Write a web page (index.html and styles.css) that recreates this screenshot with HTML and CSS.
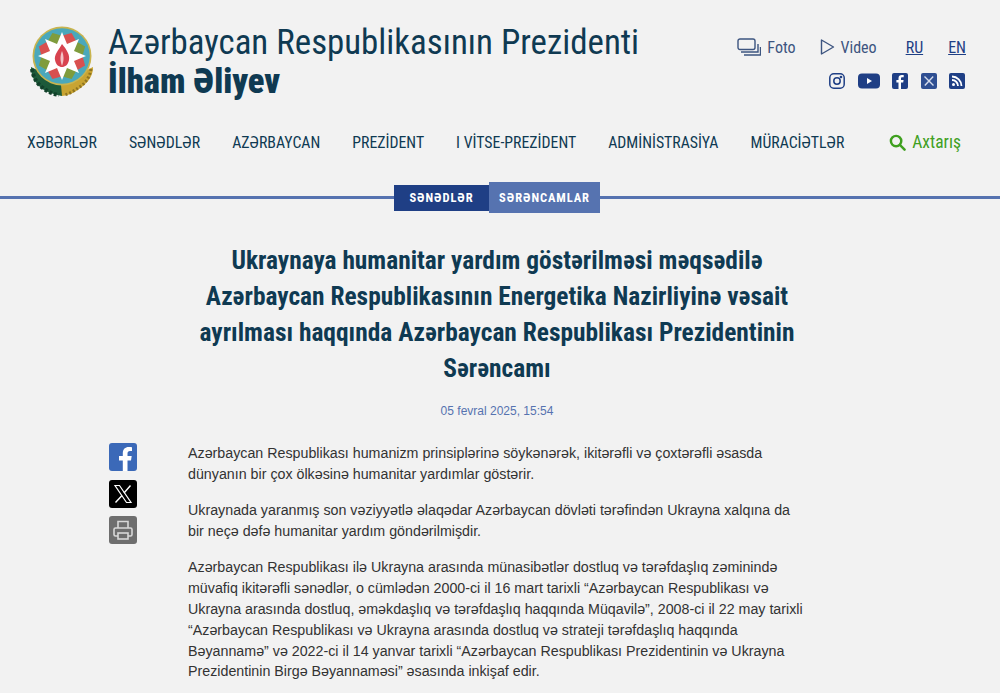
FILE: index.html
```html
<!DOCTYPE html>
<html lang="az">
  <head>
    <meta charset="utf-8">
    <meta name="viewport" content="width=device-width">
    <title>Ukraynaya humanitar yardım göstərilməsi</title>
    <link rel="stylesheet" href="styles.css">
  </head>
  <body>
  <header class="header">
    <a class="brand">
      <svg class="emblem" viewBox="0 0 66 72" width="66" height="72">
        <path d="M2 42 C2 50 5 56 10 61 C15 66 22 69 33 71 L34 60 L14 48 Z" fill="#1d5a3a"/>
        <path d="M3 44 C4 52 8 59 14 63 C19 67 24 69 30 70" fill="none" stroke="#12402a" stroke-width="4" stroke-dasharray="3 2"/>
        <path d="M64 42 C64 50 60 56 54 61 C48 66 42 70 33 71 L32 60 L52 48 Z" fill="#c8a432"/>
        <path d="M62 44 C61 52 56 59 49 63 C45 66 40 69 35 70" fill="none" stroke="#8f7420" stroke-width="3" stroke-dasharray="2 2"/>
        <circle cx="33" cy="31" r="29.500" fill="#c9b44e"/>
        <circle cx="33" cy="31" r="27.800" fill="#4aa8bb"/>
        <g transform="translate(33 31)">
          <path d="M0 0 L-9 -18 L0 -25 L9 -18 Z" fill="#d8504f" transform="rotate(22.500)"/>
          <path d="M0 0 L-9 -18 L0 -25 L9 -18 Z" fill="#7f9c3d" transform="rotate(67.500)"/>
          <path d="M0 0 L-9 -18 L0 -25 L9 -18 Z" fill="#d8504f" transform="rotate(112.500)"/>
          <path d="M0 0 L-9 -18 L0 -25 L9 -18 Z" fill="#7f9c3d" transform="rotate(157.500)"/>
          <path d="M0 0 L-9 -18 L0 -25 L9 -18 Z" fill="#d8504f" transform="rotate(202.500)"/>
          <path d="M0 0 L-9 -18 L0 -25 L9 -18 Z" fill="#7f9c3d" transform="rotate(247.500)"/>
          <path d="M0 0 L-9 -18 L0 -25 L9 -18 Z" fill="#d8504f" transform="rotate(292.500)"/>
          <path d="M0 0 L-9 -18 L0 -25 L9 -18 Z" fill="#7f9c3d" transform="rotate(337.500)"/>
        </g>
        <path d="M33 7 L38 19 L50 14 L45 26 L57 31 L45 36 L50 48 L38 43 L33 55 L28 43 L16 48 L21 36 L9 31 L21 26 L16 14 L28 19 Z" fill="#fff"/>
        <path d="M33 19 C38 25 41 30 40 35 C39 40 36 42 33 42 C30 42 27 40 26 35 C25 30 29 26 33 19 Z" fill="#d8434f"/>
        <path d="M33 26 C34.500 30 35.500 34 33 41 C30.500 34 31.500 30 33 26 Z" fill="#f3c3c6"/>
      </svg>
      <span class="brandText">
        <span class="brandTitle">Azərbaycan Respublikasının Prezidenti</span>
        <span class="brandName">İlham Əliyev</span>
      </span>
    </a>
    <div class="headerRight">
      <div class="topLinks">
        <a class="topLink">
          <svg viewBox="0 0 24 18" width="24" height="18" fill="none" stroke="#3d5580" stroke-width="1.400">
            <rect x="1" y="1" width="17" height="10.500" rx="2"/>
            <path d="M4 14 H21 V6 M7 17 H23.500 V9"/>
          </svg>
          Foto
        </a>
        <a class="topLink">
          <svg viewBox="0 0 15 18" width="15" height="18" fill="none" stroke="#3d5580" stroke-width="1.400">
            <path d="M1.500 2 L13.500 9 L1.500 16 Z" stroke-linejoin="round"/>
          </svg>
          Video
        </a>
        <div class="langs">
          <a class="lang">RU</a>
          <a class="lang">EN</a>
        </div>
      </div>
      <div class="socials">
        <svg viewBox="0 0 16 16" width="16" height="16" fill="none" stroke="#1f3f85" stroke-width="1.500">
          <rect x=".8" y=".8" width="14.400" height="14.400" rx="4"/>
          <circle cx="8" cy="8" r="3.200"/>
          <circle cx="12" cy="4" r=".6" fill="#1f3f85"/>
        </svg>
        <svg viewBox="0 0 22 16" width="22" height="16">
          <rect width="22" height="15" y=".5" rx="4" fill="#1f3f85"/>
          <path d="M9 5 L14 8 L9 11 Z" fill="#fff"/>
        </svg>
        <svg viewBox="0 0 16 16" width="16" height="16">
          <rect width="16" height="16" rx="2" fill="#1f3f85"/>
          <path d="M9 16 V9.500 H11.200 L11.600 7 H9 V5.500 C9 4.700 9.400 4.200 10.300 4.200 H11.700 V2.100 C11 2 10.400 2 9.800 2 C7.800 2 6.500 3.200 6.500 5.200 V7 H4.400 V9.500 H6.500 V16 Z" fill="#fff"/>
        </svg>
        <svg viewBox="0 0 16 16" width="16" height="16">
          <rect width="16" height="16" rx="2" fill="#2f4f92"/>
          <path d="M3.500 3.500 L12.500 12.500 M12.200 3.500 L3.800 12.500" stroke="#d5dcec" stroke-width="1.400"/>
        </svg>
        <svg viewBox="0 0 16 16" width="16" height="16">
          <rect width="16" height="16" rx="2" fill="#1f3f85"/>
          <circle cx="4.500" cy="11.500" r="1.500" fill="#fff"/>
          <path d="M3 7 A6 6 0 0 1 9 13 M3 3.500 A9.500 9.500 0 0 1 12.500 13" fill="none" stroke="#fff" stroke-width="1.800"/>
        </svg>
      </div>
    </div>
  </header>

  <nav class="nav">
    <a>XƏBƏRLƏR</a>
    <a>SƏNƏDLƏR</a>
    <a>AZƏRBAYCAN</a>
    <a>PREZİDENT</a>
    <a>I VİTSE-PREZİDENT</a>
    <a>ADMİNİSTRASİYA</a>
    <a>MÜRACİƏTLƏR</a>
    <a class="search">
      <svg viewBox="0 0 18 18" width="17" height="17" fill="none" stroke="#3fa01f" stroke-width="2.600">
        <circle cx="7.500" cy="7.500" r="5.500"/>
        <path d="M11.500 11.500 L16.500 16.500" stroke-linecap="round"/>
      </svg>
      Axtarış
    </a>
  </nav>

  <div class="crumbs">
    <a class="crumb">SƏNƏDLƏR</a>
    <a class="crumb crumbActive">SƏRƏNCAMLAR</a>
  </div>

  <main class="article">
    <h1 class="articleTitle">Ukraynaya humanitar yardım göstərilməsi məqsədilə Azərbaycan Respublikasının Energetika Nazirliyinə vəsait ayrılması haqqında Azərbaycan Respublikası Prezidentinin Sərəncamı</h1>
    <div class="date">05 fevral 2025, 15:54</div>
    <div class="articleBody">
      <div class="share">
        <a class="shareBtn shareFb">
          <svg viewBox="0 0 28 28" width="28" height="28">
            <path d="M18.500 28 V17.500 H22 L22.700 13 H18.500 V10.500 C18.500 9 19.200 8 21 8 H23 V4.300 C22 4.100 20.800 4 19.700 4 C16.200 4 13.800 6.200 13.800 10 V13 H10 V17.500 H13.800 V28 Z" fill="#fff"/>
          </svg>
        </a>
        <a class="shareBtn shareX">
          <svg viewBox="0 0 28 28" width="28" height="28" fill="none" stroke="#fff">
            <path d="M6 5.500 H10.500 L22 22.500 H17.500 Z" stroke-width="1.200"/>
            <path d="M21.500 5.500 L15 13 M13 15.500 L6.500 22.500" stroke-width="1.400"/>
          </svg>
        </a>
        <a class="shareBtn sharePrint">
          <svg viewBox="0 0 28 28" width="28" height="28" fill="none" stroke="#d8d8d8" stroke-width="1.600">
            <path d="M9 12 V5.500 H19 V12"/>
            <path d="M9 20 H6.500 C5.500 20 5 19.500 5 18.500 V13.500 C5 12.500 5.500 12 6.500 12 H21.500 C22.500 12 23 12.500 23 13.500 V18.500 C23 19.500 22.500 20 21.500 20 H19"/>
            <rect x="9" y="17" width="10" height="6"/>
          </svg>
        </a>
      </div>
      <div class="articleText">
        <p>Azərbaycan Respublikası humanizm prinsiplərinə söykənərək, ikitərəfli və çoxtərəfli əsasda dünyanın bir çox ölkəsinə humanitar yardımlar göstərir.</p>
        <p>Ukraynada yaranmış son vəziyyətlə əlaqədar Azərbaycan dövləti tərəfindən Ukrayna xalqına da bir neçə dəfə humanitar yardım göndərilmişdir.</p>
        <p>Azərbaycan Respublikası ilə Ukrayna arasında münasibətlər dostluq və tərəfdaşlıq zəminində müvafiq ikitərəfli sənədlər, o cümlədən 2000-ci il 16 mart tarixli “Azərbaycan Respublikası və Ukrayna arasında dostluq, əməkdaşlıq və tərəfdaşlıq haqqında Müqavilə”, 2008-ci il 22 may tarixli “Azərbaycan Respublikası və Ukrayna arasında dostluq və strateji tərəfdaşlıq haqqında Bəyannamə” və 2022-ci il 14 yanvar tarixli “Azərbaycan Respublikası Prezidentinin və Ukrayna Prezidentinin Birgə Bəyannaməsi” əsasında inkişaf edir.</p>
      </div>
    </div>
  </main>
  </body>
</html>
```
FILE: styles.css
```css
html, body {
  margin: 0;
  padding: 0;
}
body {
  background-color: #F2F2F2;
  font-family: "Liberation Sans", Arial, sans-serif;
  height: 693px;
  overflow: hidden;
}
a {
  color: inherit;
}

/* Header */
.header {
  display: flex;
  justify-content: space-between;
  padding: 24px 34px 0 29px;
  height: 78px;
}
.brand {
  display: flex;
  gap: 13px;
}
.emblem {
  flex: none;
  margin-top: 1px;
}
.brandText {
  display: flex;
  flex-direction: column;
  color: #0F3A52;
  font-family: Roboto, sans-serif;
  font-stretch: condensed;
}
.brandTitle {
  font-size: 34.900px;
  line-height: 37px;
}
.brandName {
  margin-top: 2px;
  font-size: 34.500px;
  line-height: 37px;
  font-weight: 900;
}
.headerRight {
  display: flex;
  flex-direction: column;
  align-items: flex-end;
  gap: 15px;
  padding-top: 14px;
}
.topLinks {
  display: flex;
  align-items: center;
  gap: 24px;
  height: 18px;
  font-family: Roboto, sans-serif;
  font-stretch: condensed;
  font-size: 16px;
  color: #3D5580;
}
.topLink {
  display: flex;
  align-items: center;
  gap: 6px;
}
.langs {
  display: flex;
  gap: 25px;
  margin-left: 5px;
}
.lang {
  color: #1F3F85;
  text-decoration: underline;
}
.socials {
  display: flex;
  align-items: center;
  gap: 12.500px;
  padding: 2px 1px 0 0;
}

/* Menu */
.nav {
  display: flex;
  align-items: center;
  gap: 32px;
  padding: 0 39px 0 27px;
  margin-top: 29px;
  height: 22px;
  font-family: Roboto, sans-serif;
  font-stretch: condensed;
  font-size: 15.800px;
  white-space: nowrap;
  color: #0F3A52;
}
.search {
  display: flex;
  align-items: center;
  gap: 6px;
  margin-left: auto;
  font-size: 17.500px;
  color: #3FA01F;
}

/* Breadcrumb */
.crumbs {
  display: flex;
  justify-content: center;
  align-items: center;
  margin-top: 29px;
  padding-right: 6px;
  height: 31px;
  background: linear-gradient(#5673B0, #5673B0) center / 100% 3px no-repeat;
  font-family: Roboto, sans-serif;
  font-stretch: condensed;
  font-size: 12.500px;
  font-weight: 700;
  letter-spacing: 0.9px;
  color: #FFFFFF;
}
.crumb {
  display: flex;
  align-items: center;
  justify-content: center;
  width: 95px;
  height: 26px;
  background-color: #1F3F85;
}
.crumbActive {
  width: 111px;
  height: 31px;
  background-color: #5673B0;
}

/* Article */
.article {
  padding: 29px 6px 0 0;
}
.articleTitle {
  width: 640px;
  margin: 0 auto;
  font-family: Roboto, sans-serif;
  font-stretch: condensed;
  font-size: 25.400px;
  line-height: 36px;
  font-weight: 700;
  text-align: center;
  color: #0F3A52;
}
.date {
  margin-top: 17px;
  font-size: 12px;
  line-height: 16px;
  text-align: center;
  color: #5673B0;
}
.articleBody {
  display: flex;
  gap: 51px;
  margin-top: 24px;
  padding-left: 109px;
}
.share {
  display: flex;
  flex-direction: column;
  gap: 8.500px;
}
.shareBtn {
  display: block;
  width: 28px;
  height: 28px;
  border-radius: 3px;
}
.shareFb {
  background-color: #3B69B8;
}
.shareX {
  background-color: #000000;
}
.sharePrint {
  background-color: #6E6E6E;
}
.articleText {
  width: 617px;
  font-size: 14.250px;
  line-height: 20.800px;
  color: #333333;
}
.articleText p {
  margin: 0 0 15.600px 0;
}
```
